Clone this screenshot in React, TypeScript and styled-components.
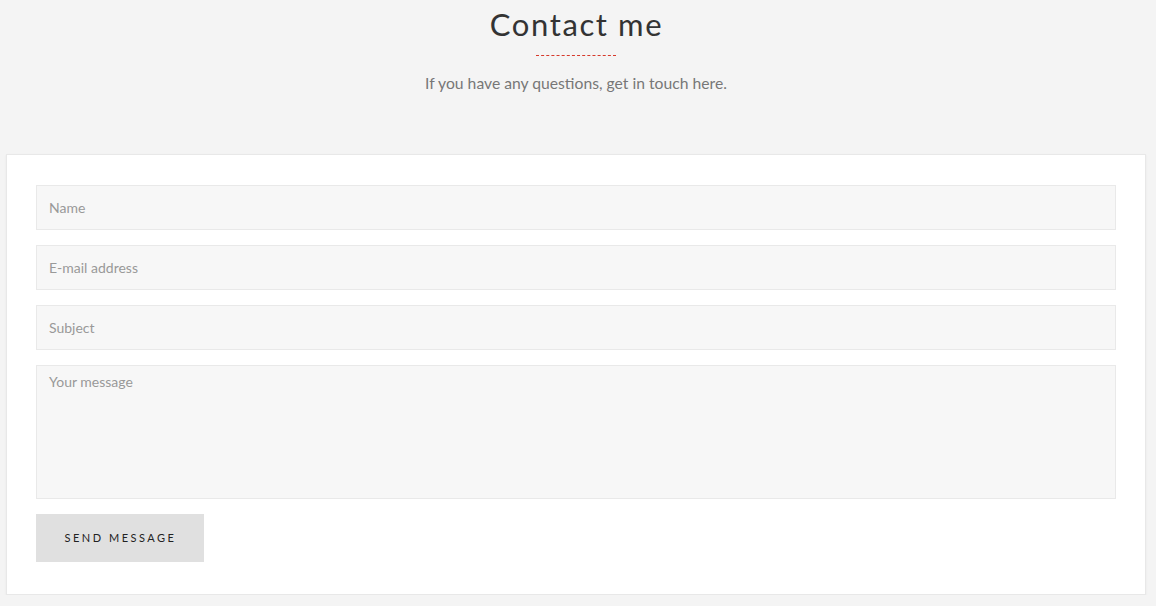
import React from "react";
import styled, { createGlobalStyle } from "styled-components";

const Global = createGlobalStyle`
  html, body { margin: 0; padding: 0; background: #f4f4f4; }
  body { font-family: Lato, "Open Sans", sans-serif; }
  * { box-sizing: border-box; }
`;

const Page = styled.div`
  padding: 0 10px 0 6px;
  display: flex;
  flex-direction: column;
  align-items: stretch;
`;

const Header = styled.header`
  display: flex;
  flex-direction: column;
  align-items: center;
  padding-top: 4px;
  height: 154px;
`;

const Title = styled.h1`
  margin: 0;
  font-family: Lato, sans-serif;
  font-weight: 400;
  font-size: 31px;
  line-height: 40px;
  letter-spacing: 1.6px;
  color: #333;
  padding-left: 1px;
`;

const Divider = styled.div`
  width: 80px;
  height: 0;
  border-top: 1px dashed #d6392b;
  margin-top: 11px;
`;

const Subtitle = styled.p`
  margin: 17px 0 0;
  font-size: 15.7px;
  line-height: 20px;
  color: #777;
`;

const Card = styled.form`
  background: #fff;
  border: 1px solid #e8e8e8;
  box-shadow: 0 1px 2px rgba(0, 0, 0, 0.06);
  padding: 30px 29px 32px;
  display: flex;
  flex-direction: column;
  gap: 15px;
`;

const Field = styled.input`
  height: 45px;
  width: 100%;
  background: #f7f7f7;
  border: 1px solid #e9e9e9;
  padding: 0 12px;
  font-family: Lato, sans-serif;
  font-size: 14px;
  color: #555;
  outline: none;
  &::placeholder { color: #999; }
`;

const Message = styled.textarea`
  height: 134px;
  width: 100%;
  background: #f7f7f7;
  border: 1px solid #e9e9e9;
  padding: 7px 12px;
  font-family: Lato, sans-serif;
  font-size: 14px;
  line-height: 18px;
  color: #555;
  resize: none;
  outline: none;
  &::placeholder { color: #999; }
`;

const Button = styled.button`
  align-self: flex-start;
  width: 168px;
  height: 48px;
  background: #e0e0e0;
  border: none;
  font-family: Lato, sans-serif;
  font-size: 11px;
  letter-spacing: 2.5px;
  color: #222;
  text-transform: uppercase;
  padding: 0 0 2px 1px;
  cursor: pointer;
`;

export default function App() {
  return (
    <>
      <Global />
      <Page>
        <Header>
          <Title>Contact me</Title>
          <Divider />
          <Subtitle>If you have any questions, get in touch here.</Subtitle>
        </Header>
        <Card onSubmit={(e) => e.preventDefault()}>
          <Field placeholder="Name" />
          <Field placeholder="E-mail address" />
          <Field placeholder="Subject" />
          <Message placeholder="Your message" />
          <Button type="submit">Send message</Button>
        </Card>
      </Page>
    </>
  );
}
